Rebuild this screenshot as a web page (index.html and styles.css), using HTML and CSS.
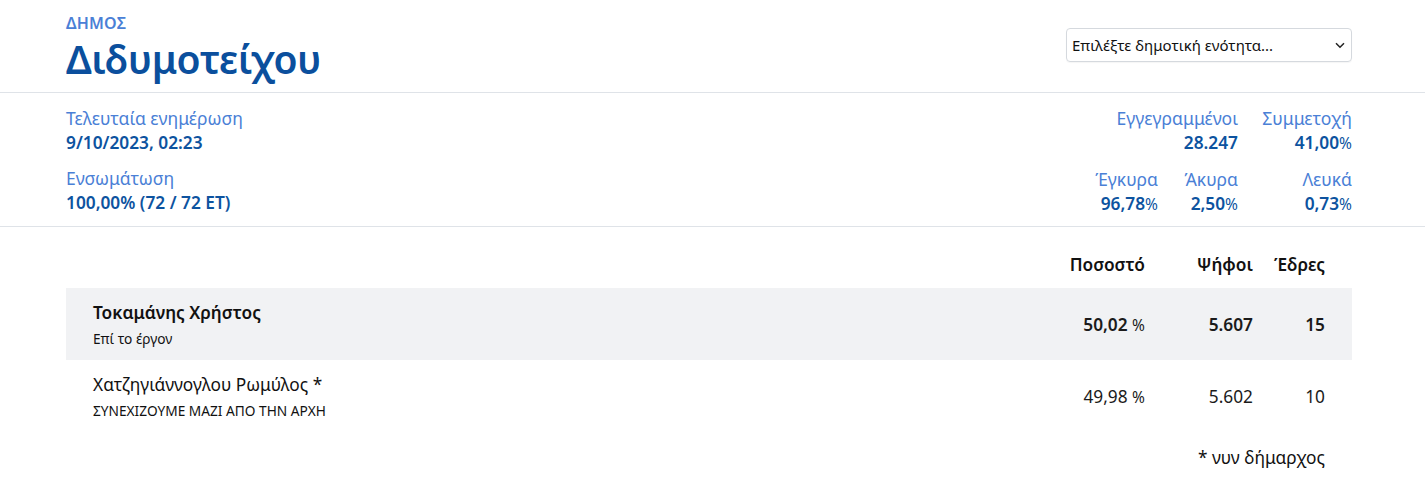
FILE: index.html
```html
<!DOCTYPE html>
<html lang="el">
<head>
<meta charset="utf-8">
<title>Δήμος Διδυμοτείχου</title>
<link rel="stylesheet" href="styles.css">
</head>
<body>
<header class="top">
  <div class="wrap top-inner">
    <div class="titles">
      <div class="kicker">ΔΗΜΟΣ</div>
      <h1 class="title">Διδυμοτείχου</h1>
    </div>
    <div class="select-box">
      <span>Επιλέξτε δημοτική ενότητα...</span>
      <svg class="chev" width="10" height="7" viewBox="0 0 10 7"><path d="M1 1.2 L5 5.2 L9 1.2" fill="none" stroke="#222" stroke-width="1.5"/></svg>
    </div>
  </div>
</header>
<section class="stats">
  <div class="wrap stats-inner">
    <div class="stats-left">
      <div class="stat">
        <div class="lbl">Τελευταία ενημέρωση</div>
        <div class="val">9/10/2023, 02:23</div>
      </div>
      <div class="stat">
        <div class="lbl">Ενσωμάτωση</div>
        <div class="val">100,00% (72 / 72 ΕΤ)</div>
      </div>
    </div>
    <div class="stats-right">
      <div class="stat c12">
        <div class="lbl">Εγγεγραμμένοι</div>
        <div class="val">28.247</div>
      </div>
      <div class="stat c3">
        <div class="lbl">Συμμετοχή</div>
        <div class="val">41,00<span class="pct">%</span></div>
      </div>
      <div class="stat">
        <div class="lbl">Έγκυρα</div>
        <div class="val">96,78<span class="pct">%</span></div>
      </div>
      <div class="stat">
        <div class="lbl">Άκυρα</div>
        <div class="val">2,50<span class="pct">%</span></div>
      </div>
      <div class="stat">
        <div class="lbl">Λευκά</div>
        <div class="val">0,73<span class="pct">%</span></div>
      </div>
    </div>
  </div>
</section>
<main class="wrap results">
  <div class="row head">
    <div class="name"></div>
    <div class="num c-pct">Ποσοστό</div>
    <div class="num c-votes">Ψήφοι</div>
    <div class="num c-seats">Έδρες</div>
  </div>
  <div class="row cand winner">
    <div class="name">
      <div class="cname">Τοκαμάνης Χρήστος</div>
      <div class="party">Επί το έργον</div>
    </div>
    <div class="num c-pct">50,02 <span class="pct">%</span></div>
    <div class="num c-votes">5.607</div>
    <div class="num c-seats">15</div>
  </div>
  <div class="row cand">
    <div class="name">
      <div class="cname">Χατζηγιάννογλου Ρωμύλος *</div>
      <div class="party">ΣΥΝΕΧΙΖΟΥΜΕ ΜΑΖΙ ΑΠΟ ΤΗΝ ΑΡΧΗ</div>
    </div>
    <div class="num c-pct">49,98 <span class="pct">%</span></div>
    <div class="num c-votes">5.602</div>
    <div class="num c-seats">10</div>
  </div>
  <div class="note">* νυν δήμαρχος</div>
</main>
</body>
</html>
```
FILE: styles.css
```css
* { box-sizing: border-box; }
html, body { margin: 0; padding: 0; background: #fff; }
body {
  font-family: "Noto Sans", "Open Sans", sans-serif;
  color: #1b1b1b;
}
.wrap { padding: 0 73px 0 66px; }

.top { border-bottom: 1px solid #dfe3e8; }
.top-inner {
  display: flex;
  justify-content: space-between;
  align-items: flex-start;
  padding-top: 12px;
  padding-bottom: 8px;
}
.kicker {
  font-size: 16px;
  font-weight: 600;
  color: #4a80d6;
  line-height: 22px;
  letter-spacing: 0.2px;
}
.title {
  margin: 0;
  font-size: 39px;
  font-weight: 600;
  color: #0b4f9d;
  line-height: 50px;
  letter-spacing: -0.4px;
}
.select-box {
  margin-top: 16px;
  width: 286px;
  height: 34px;
  border: 1px solid #d5d9de;
  border-radius: 4px;
  display: flex;
  align-items: center;
  justify-content: space-between;
  padding: 0 6px 0 5px;
  font-size: 15px;
  color: #111;
  box-shadow: 0 1px 1px rgba(0,0,0,0.04);
}
.chev { display: block; }

.stats { border-bottom: 1px solid #dfe3e8; }
.stats-inner {
  display: flex;
  justify-content: space-between;
  padding-top: 14px;
  padding-bottom: 9px;
}
.stats-left { display: flex; flex-direction: column; gap: 12px; }
.lbl {
  font-size: 17.5px;
  color: #4a80d6;
  line-height: 23px;
}
.val {
  font-size: 17.3px;
  font-weight: 600;
  color: #0d539f;
  line-height: 25px;
}
.pct { font-weight: 400; font-size: 15.5px; }
.stats-right {
  display: grid;
  grid-template-columns: 70px 80px 114px;
  row-gap: 12px;
  text-align: right;
}
.stats-right .c12 { grid-column: 1 / 3; }
.stats-right .c3 { grid-column: 3; }

.results { padding-top: 25px; padding-bottom: 20px; }
.row { display: flex; align-items: center; }
.name { flex: 1; padding-left: 27px; }
.num { text-align: right; font-size: 17.3px; }
.c-pct { width: 110px; }
.c-votes { width: 108px; }
.c-seats { width: 72px; }
.row > .num:last-child { margin-right: 27px; }
.head { height: 24px; margin-bottom: 12px; }
.head .num { font-weight: 600; color: #111; }
.cand { height: 72px; }
.winner { background: #f1f2f4; }
.winner .num { font-weight: 600; }
.winner .num .pct { font-weight: 400; }
.cand .num .pct { font-size: 15.5px; }
.cname { font-size: 17.3px; line-height: 24px; color: #111; }
.winner .cname { font-weight: 600; }
.party { font-size: 13.7px; line-height: 18px; margin-top: 5px; color: #111; }
.note {
  text-align: right;
  padding-right: 27px;
  margin-top: 14px;
  font-size: 17.3px;
  color: #111;
}
```
